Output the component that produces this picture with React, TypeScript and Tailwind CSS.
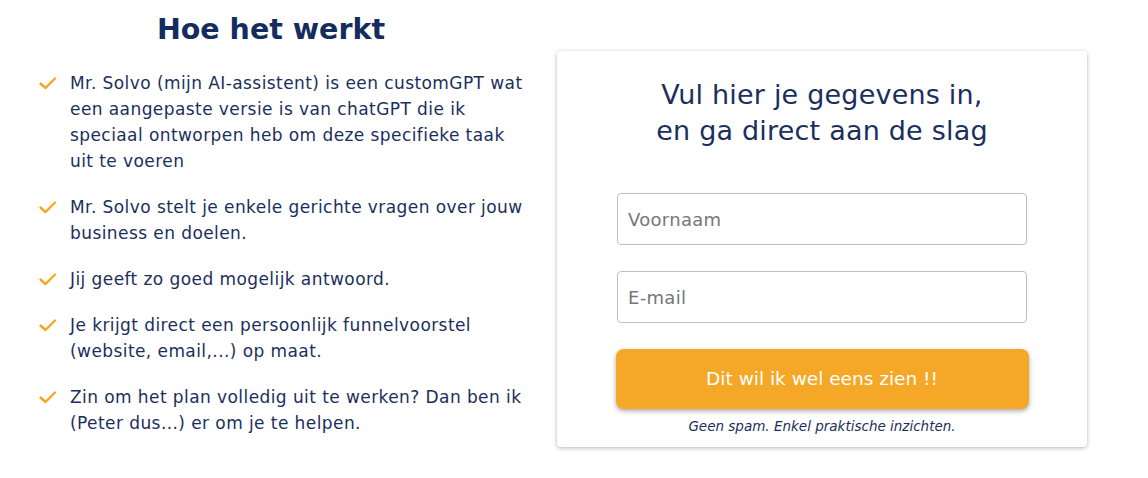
import React from "react";

const items: string[][] = [
  [
    "Mr. Solvo (mijn AI-assistent) is een customGPT wat",
    "een aangepaste versie is van chatGPT die ik",
    "speciaal ontworpen heb om deze specifieke taak",
    "uit te voeren",
  ],
  ["Mr. Solvo stelt je enkele gerichte vragen over jouw", "business en doelen."],
  ["Jij geeft zo goed mogelijk antwoord."],
  ["Je krijgt direct een persoonlijk funnelvoorstel", "(website, email,...) op maat."],
  ["Zin om het plan volledig uit te werken? Dan ben ik", "(Peter dus...) er om je te helpen."],
];

function Check() {
  return (
    <svg width="20" height="18" viewBox="0 0 20 18" className="shrink-0 mt-[4px] ml-[-1px]">
      <path d="M2.5 9.5 L7.5 14 L17 4.5" fill="none" stroke="#f5a623" strokeWidth="2.4" strokeLinecap="round" strokeLinejoin="round" />
    </svg>
  );
}

export default function App() {
  return (
    <div className="w-[1148px] h-[478px] bg-white flex font-['DejaVu_Sans',sans-serif] text-[#1b2f5c]">
      <div className="w-[542px] shrink-0 pt-[10px]">
        <h2 className="text-center text-[28.5px] leading-[40px] font-bold text-[#142c5e]">Hoe het werkt</h2>
        <ul className="mt-[20px] pl-[39px] flex flex-col gap-[20px]">
          {items.map((lines, i) => (
            <li key={i} className="flex gap-[12px]">
              <Check />
              <p className="text-[17px] leading-[26px] tracking-[0.42px] whitespace-nowrap">
                {lines.map((l, j) => (
                  <React.Fragment key={j}>
                    {l}
                    {j < lines.length - 1 && <br />}
                  </React.Fragment>
                ))}
              </p>
            </li>
          ))}
        </ul>
      </div>
      <div className="ml-[15px] mt-[51px] w-[530px] h-[396px] rounded-[4px] bg-white shadow-[0_1px_4px_rgba(0,0,0,0.3)] flex flex-col items-center">
        <h3 className="mt-[26px] shrink-0 text-center text-[27px] leading-[36px] tracking-[0.2px] font-normal text-[#1b2f5c]">
          Vul hier je gegevens in,
          <br />
          en ga direct aan de slag
        </h3>
        <div className="mt-[44px] shrink-0 w-[410px] h-[52px] rounded-[4px] border border-[#b8c0d0] flex items-center px-[10px] text-[18px] tracking-[0.3px] text-[#777777]">
          Voornaam
        </div>
        <div className="mt-[26px] shrink-0 w-[410px] h-[52px] rounded-[4px] border border-[#b8c0d0] flex items-center px-[10px] text-[18px] tracking-[0.3px] text-[#777777]">
          E-mail
        </div>
        <button className="mt-[26px] shrink-0 w-[413px] h-[60px] rounded-[8px] bg-[#f5a727] text-white text-[18.5px] shadow-[0_2px_5px_rgba(0,0,0,0.35)]">
          Dit wil ik wel eens zien !!
        </button>
        <p className="mt-[7px] shrink-0 text-[13.5px] italic text-[#1b2f5c]">Geen spam. Enkel praktische inzichten.</p>
      </div>
    </div>
  );
}
